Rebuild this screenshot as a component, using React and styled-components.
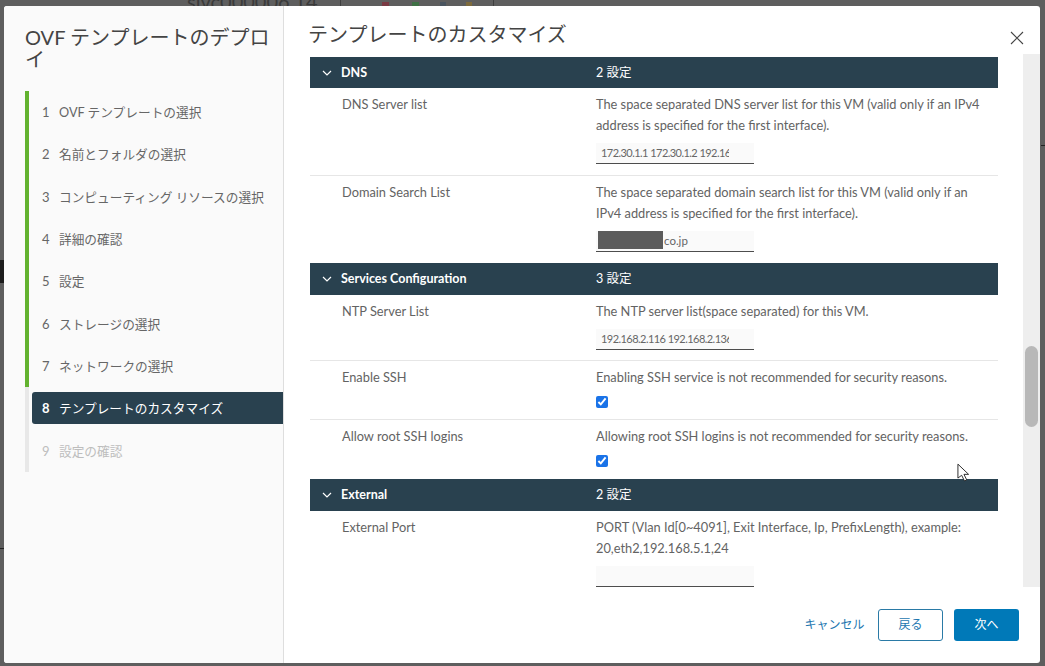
import React from "react";
import styled, { createGlobalStyle } from "styled-components";

const Global = createGlobalStyle`
  html, body { margin: 0; padding: 0; height: 100%; }
  body { font-family: "Lato", "Noto Sans CJK JP", sans-serif; background: #5e5e5e; overflow: hidden; }
  * { box-sizing: border-box; }
`;
const FONT = `"Lato", "Noto Sans CJK JP", sans-serif`;

const Backdrop = styled.div`
  width: 1045px; height: 666px; padding: 6px 5px 3px 4px; background: #5e5e5e; position: relative; overflow: hidden;
`;
const BackdropText = styled.span`
  position: absolute; left: ${p => p.$x}px; top: ${p => p.$y}px; color: #3a3a3a; font: ${p => p.$size || 12}px/1 ${FONT}; white-space: nowrap;
`;
const BackdropMark = styled.i`
  position: absolute; left: ${p => p.$x}px; top: ${p => p.$y}px; width: ${p => p.$w}px; height: ${p => p.$h}px; background: ${p => p.$c};
`;
const Dialog = styled.div`
  position: relative; z-index: 1; width: 100%; height: 100%; display: flex; background: #fff; border-radius: 3px; font-family: ${FONT};
`;
const Side = styled.aside`
  width: 280px; flex: none; background: #fafafa; border-right: 1px solid #dedede; border-radius: 3px 0 0 3px; padding: 20px 0 0 21px;
`;
const SideTitle = styled.h2`
  margin: 0 0 21px; width: 256px; font: 400 20px/22px ${FONT}; color: #444;
`;
const Steps = styled.ol`
  list-style: none; margin: 0; padding: 0; display: flex; flex-direction: column;
`;
const Step = styled.li`
  height: 42.33px; border-left: 4px solid ${p => p.$state === "todo" || p.$state === "active" ? "#e8e8e8" : "#62b22f"}; display: flex; align-items: stretch;
`;
const StepInner = styled.div`
  flex: 1; display: flex; align-items: center; gap: 9px; padding-left: 10px; height: ${p => p.$active ? "32px" : "auto"};
  margin: ${p => p.$active ? "5px 0 5px 3px" : "0 0 0 3px"}; border-radius: 3px 0 0 3px;
  background: ${p => p.$active ? "#29414f" : "transparent"};
  color: ${p => p.$active ? "#fff" : p.$state === "todo" ? "#bdbdbd" : "#666"};
  font: 400 12.7px/18px ${FONT}; white-space: nowrap;
`;
const StepNum = styled.span`
  width: 8px; font-size: 13px; font-weight: ${p => p.$active ? 700 : 400};
`;

const Main = styled.main`
  flex: 1; min-width: 0; display: flex; flex-direction: column; position: relative;
`;
const MainTitle = styled.h1`
  margin: 0; height: 48px; padding: 13px 0 0 24px; font: 400 20px/30px ${FONT}; color: #444;
`;
const CloseBtn = styled.button`
  position: absolute; right: 14px; top: 25px; width: 16px; height: 16px; padding: 0; border: 0; background: none; color: #444; display: flex;
`;
const ScrollArea = styled.div`
  height: 533px; padding: 3px 42px 0 26px; overflow: hidden; position: relative; flex: none;
`;
const ScrollTrack = styled.div`
  position: absolute; top: 0; right: 0; width: 17px; height: 100%; background: #eeeeee;
`;
const ScrollThumb = styled.div`
  position: absolute; left: 2px; top: 292px; width: 13px; height: 81px; border-radius: 7px; background: #b8b8b8;
`;
const SectionHead = styled.div`
  display: grid; grid-template-columns: 286px 1fr; height: ${p => p.$h || 32}px; align-items: center; background: #29414f; color: #fff;
  font: 700 12.5px/16px ${FONT};
`;
const SectionName = styled.div`
  display: flex; align-items: center; gap: 9px; padding-left: 12px;
`;
const SectionCount = styled.span`
  font-weight: 400;
`;
const Row = styled.div`
  display: grid; grid-template-columns: 286px 1fr; height: ${p => p.$h}px; padding-top: 5.5px;
  border-bottom: ${p => p.$last ? "none" : "1px solid #e6e6e6"}; color: #636363; font: 400 12.8px/21px ${FONT};
`;
const RowLabel = styled.div`
  padding-left: 32px;
`;
const RowBody = styled.div`
  display: flex; flex-direction: column; align-items: flex-start; padding-right: 8px;
`;
const Field = styled.div`
  position: relative; margin-top: 7.5px; width: 158px; height: 21px;
`;
const FieldInput = styled.input`
  display: block; width: 100%; height: 100%; margin: 0; border: 0; border-bottom: 1px solid #4d4d4d; border-radius: 0; outline: none;
  padding: 0 ${p => p.$masked ? 24 : 25}px 2px ${p => p.$masked ? 68 : 5}px; font: 400 ${p => p.$masked ? 11.5 : 11}px/18px ${FONT};
  letter-spacing: ${p => p.$masked ? 0 : -0.55}px; color: #666; background: #fafafa;
`;
const Redact = styled.span`
  position: absolute; left: 2px; top: 0; width: 65px; height: 18px; background: #5c5c5c;
`;
const CheckBox = styled.input`
  margin: 8px 0 0; width: 12px; height: 12px; accent-color: #1a73e8;
`;
const Cursor = styled.svg`
  position: absolute; left: 957px; top: 463px; z-index: 3;
`;
const Footer = styled.footer`
  flex: 1; display: flex; align-items: flex-start; justify-content: flex-end; gap: 11px; padding: 22px 21px 0 0;
`;
const CancelLink = styled.button`
  border: 0; background: none; padding: 0; height: 32px; width: 63px; margin-right: 1px; color: #1d77b0; font: 400 12px/32px ${FONT};
`;
const OutlineBtn = styled.button`
  width: 65px; height: 32px; border: 1px solid #2a7aa6; border-radius: 3px; background: #fff; color: #1d77b0; font: 400 12px/30px ${FONT}; padding: 0;
`;
const PrimaryBtn = styled.button`
  width: 65px; height: 32px; border: 0; border-radius: 3px; background: #0079b8; color: #fff; font: 400 12px/32px ${FONT}; padding: 0;
`;

const Chevron = () => (
  <svg width="10" height="10" viewBox="0 0 10 10" fill="none" stroke="#fff" strokeWidth="1.2"><path d="M1 3l4 4 4-4" /></svg>
);

const steps = [
  ["1", "OVF テンプレートの選択", "done"],
  ["2", "名前とフォルダの選択", "done"],
  ["3", "コンピューティング リソースの選択", "done"],
  ["4", "詳細の確認", "done"],
  ["5", "設定", "done"],
  ["6", "ストレージの選択", "done"],
  ["7", "ネットワークの選択", "done"],
  ["8", "テンプレートのカスタマイズ", "active"],
  ["9", "設定の確認", "todo"],
];

export default function App() {
  return (
    <Backdrop>
      <Global />
      <BackdropMark $x={340} $y={0} $w={1} $h={6} $c="#3f3f3f" />
      <BackdropMark $x={493} $y={0} $w={1} $h={6} $c="#3f3f3f" />
      <BackdropMark $x={382} $y={2} $w={7} $h={4} $c="#7a3a44" />
      <BackdropMark $x={412} $y={2} $w={7} $h={4} $c="#3f7045" />
      <BackdropMark $x={440} $y={2} $w={6} $h={4} $c="#4a5560" />
      <BackdropMark $x={466} $y={2} $w={6} $h={4} $c="#7d6a3c" />
      <BackdropMark $x={0} $y={260} $w={4} $h={23} $c="#1c1c1c" />
      <BackdropMark $x={0} $y={548} $w={4} $h={1} $c="#222" />
      <BackdropMark $x={1041} $y={145} $w={4} $h={1} $c="#222" />
      <BackdropText $x={187} $y={-9} $size={20}>sivc000006.14</BackdropText>
      <Dialog>
        <Side>
          <SideTitle>OVF テンプレートのデプロイ</SideTitle>
          <Steps>
            {steps.map(([n, t, s]) => (
              <Step key={n} $state={s}>
                <StepInner $active={s === "active"} $state={s}>
                  <StepNum $active={s === "active"}>{n}</StepNum>
                  <span>{t}</span>
                </StepInner>
              </Step>
            ))}
          </Steps>
        </Side>
        <Main>
          <MainTitle>テンプレートのカスタマイズ</MainTitle>
          <CloseBtn aria-label="閉じる">
            <svg width="14" height="14" viewBox="0 0 14 14" stroke="#444" strokeWidth="1.1" fill="none"><path d="M1 1l12 12M13 1L1 13" /></svg>
          </CloseBtn>
          <ScrollArea>
            <SectionHead $h={31}>
              <SectionName><Chevron />DNS</SectionName>
              <SectionCount>2 設定</SectionCount>
            </SectionHead>
            <Row $h={88}>
              <RowLabel>DNS Server list</RowLabel>
              <RowBody>
                <span>The space separated DNS server list for this VM (valid only if an IPv4 address is specified for the first interface).</span>
                <Field><FieldInput readOnly value="172.30.1.1 172.30.1.2 192.168.1.1" /></Field>
              </RowBody>
            </Row>
            <Row $h={87} $last>
              <RowLabel>Domain Search List</RowLabel>
              <RowBody>
                <span>The space separated domain search list for this VM (valid only if an IPv4 address is specified for the first interface).</span>
                <Field><FieldInput $masked readOnly value="co.jp" /><Redact /></Field>
              </RowBody>
            </Row>
            <SectionHead>
              <SectionName><Chevron />Services Configuration</SectionName>
              <SectionCount>3 設定</SectionCount>
            </SectionHead>
            <Row $h={66}>
              <RowLabel>NTP Server List</RowLabel>
              <RowBody>
                <span>The NTP server list(space separated) for this VM.</span>
                <Field><FieldInput readOnly value="192.168.2.116 192.168.2.136" /></Field>
              </RowBody>
            </Row>
            <Row $h={59}>
              <RowLabel>Enable SSH</RowLabel>
              <RowBody>
                <span>Enabling SSH service is not recommended for security reasons.</span>
                <CheckBox type="checkbox" defaultChecked />
              </RowBody>
            </Row>
            <Row $h={59} $last>
              <RowLabel>Allow root SSH logins</RowLabel>
              <RowBody>
                <span>Allowing root SSH logins is not recommended for security reasons.</span>
                <CheckBox type="checkbox" defaultChecked />
              </RowBody>
            </Row>
            <SectionHead>
              <SectionName><Chevron />External</SectionName>
              <SectionCount>2 設定</SectionCount>
            </SectionHead>
            <Row $h={90} $last>
              <RowLabel>External Port</RowLabel>
              <RowBody>
                <span>PORT (Vlan Id[0~4091], Exit Interface, Ip, PrefixLength), example: 20,eth2,192.168.5.1,24</span>
                <Field><FieldInput readOnly value="" /></Field>
              </RowBody>
            </Row>
            <ScrollTrack><ScrollThumb /></ScrollTrack>
          </ScrollArea>
          <Footer>
            <CancelLink>キャンセル</CancelLink>
            <OutlineBtn>戻る</OutlineBtn>
            <PrimaryBtn>次へ</PrimaryBtn>
          </Footer>
        </Main>
      </Dialog>
      <Cursor width="13" height="19" viewBox="0 0 14 20"><path d="M1 1v15l4-3 3 6 2.500-1-3-6h5z" fill="#fff" stroke="#222" strokeWidth="1" /></Cursor>
    </Backdrop>
  );
}
